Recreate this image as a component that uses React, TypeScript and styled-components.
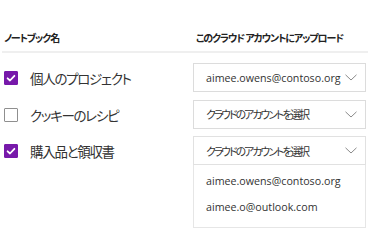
import { FC } from 'react';
import styled, { createGlobalStyle } from 'styled-components';

interface Notebook {
  name: string;
  checked: boolean;
  account: string | null;
  open?: boolean;
}

const accounts = ['aimee.owens@contoso.org', 'aimee.o@outlook.com'];

const notebooks: Notebook[] = [
  { name: '個人のプロジェクト', checked: true, account: 'aimee.owens@contoso.org' },
  { name: 'クッキーのレシピ', checked: false, account: null },
  { name: '購入品と領収書', checked: true, account: null, open: true },
];

const GlobalStyle = createGlobalStyle`
  html, body {
    margin: 0;
    padding: 0;
    background: #ffffff;
  }
  body {
    font-family: "Noto Sans CJK JP", sans-serif;
    font-feature-settings: "palt";
    color: #333333;
  }
`;

const Chevron: FC = () => (
  <svg width="12" height="7" viewBox="0 0 12 7" fill="none">
    <path d="M0.5 0.8 L6 6 L11.5 0.8" stroke="#8a8a8a" strokeWidth="1" />
  </svg>
);

const Check: FC = () => (
  <svg width="14" height="14" viewBox="0 0 14 14" fill="none">
    <path d="M3.6 7.3 L6 9.5 L10.4 4.8" stroke="#ffffff" strokeWidth="1.8" strokeLinecap="round" strokeLinejoin="round" />
  </svg>
);

const App: FC = () => {
  return (
    <>
      <GlobalStyle />
      <Page>
        <HeaderRow>
          <HeaderCell>ノートブック名</HeaderCell>
          <HeaderCell>このクラウド アカウントにアップロード</HeaderCell>
        </HeaderRow>
        <Rows>
          {notebooks.map((nb) => (
            <Row key={nb.name}>
              <NameCell>
                <Box $checked={nb.checked}>{nb.checked && <Check />}</Box>
                <Name>{nb.name}</Name>
              </NameCell>
              <Select>
                <SelectHead $open={nb.open}>
                  {nb.account ? <Email>{nb.account}</Email> : <Placeholder>クラウドのアカウントを選択</Placeholder>}
                  <Chevron />
                </SelectHead>
                {nb.open && (
                  <Menu>
                    {accounts.map((a) => (
                      <MenuItem key={a}>{a}</MenuItem>
                    ))}
                  </Menu>
                )}
              </Select>
            </Row>
          ))}
        </Rows>
      </Page>
    </>
  );
};

export default App;

const Page = styled.div`
  width: 368px;
  height: 250px;
  padding-top: 30px;
  box-sizing: border-box;
`;

const HeaderRow = styled.div`
  display: grid;
  grid-template-columns: 192px 176px;
  height: 21px;
  margin-left: 2px;
  border-bottom: 2px solid #efefef;
`;

const HeaderCell = styled.div`
  font-size: 10px;
  font-weight: 700;
  line-height: 16px;
  letter-spacing: -1.1px;
  white-space: nowrap;
  color: #222222;
  padding-left: 2px;
`;

const Rows = styled.div`
  display: flex;
  flex-direction: column;
  gap: 7.5px;
  padding-top: 10px;
`;

const Row = styled.div`
  display: grid;
  grid-template-columns: 193px 173px;
  align-items: start;
`;

const NameCell = styled.div`
  display: flex;
  align-items: center;
  gap: 12px;
  height: 29px;
  padding-left: 4px;
  padding-top: 1px;
  box-sizing: border-box;
`;

const Box = styled.div<{ $checked: boolean }>`
  width: 14px;
  height: 14px;
  flex: none;
  box-sizing: border-box;
  border-radius: 1px;
  display: flex;
  background: ${(p) => (p.$checked ? '#7719aa' : '#ffffff')};
  border: 1px solid ${(p) => (p.$checked ? '#7719aa' : '#8f8f8f')};
  svg {
    margin: -1px;
  }
`;

const Name = styled.span`
  font-size: 13.5px;
  letter-spacing: -1.3px;
  color: #333333;
  line-height: 20px;
  white-space: nowrap;
`;

const Select = styled.div`
  display: flex;
  flex-direction: column;
`;

const SelectHead = styled.div<{ $open?: boolean }>`
  height: 29px;
  box-sizing: border-box;
  border: 1px solid ${(p) => (p.$open ? '#e1e1e1' : '#dcdcdc')};
  display: flex;
  align-items: center;
  justify-content: space-between;
  padding: 0 8px 0 12px;
`;

const Email = styled.span`
  font-family: "Open Sans", sans-serif;
  font-size: 10.7px;
  color: #333333;
  white-space: nowrap;
`;

const Placeholder = styled.span`
  font-size: 10.8px;
  letter-spacing: -1.9px;
  color: #333333;
  white-space: nowrap;
`;

const Menu = styled.div`
  border: 1px solid #e6e6e6;
  border-top: none;
  padding: 3px 0 7px;
`;

const MenuItem = styled.div`
  height: 26px;
  display: flex;
  align-items: center;
  padding-left: 12px;
  font-family: "Open Sans", sans-serif;
  font-size: 10.7px;
  color: #333333;
`;
